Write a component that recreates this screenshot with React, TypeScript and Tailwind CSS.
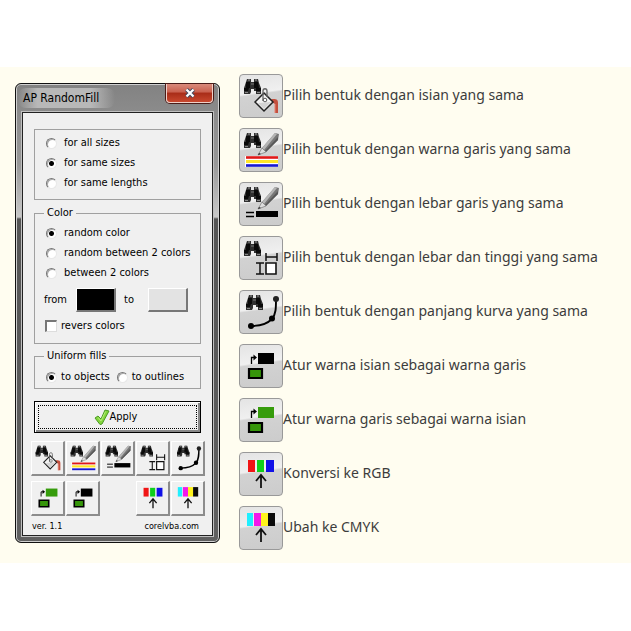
import type { ReactNode } from "react";

type IconName =
  | "fill"
  | "outlineColor"
  | "outlineWidth"
  | "dimensions"
  | "curve"
  | "fillToOutline"
  | "outlineToFill"
  | "rgb"
  | "cmyk";

function Binoculars() {
  return (
    <g>
      <path d="M8 5h4v3h3V5h4l1 4 2 5v6h-5v-3h-2v-2h-3v3l-1 2H5v-6l2-6z" fill="#303030" />
      <path d="M7 8h4v6H7zM15 8h4l1 6h-5zM5 14h5l-1 3H5zM17 14h5v3h-5z" fill="#0a0a0a" />
      <path d="M9 5h2v2H9zM16 5h2v2h-2z" fill="#666" />
      <path d="M12 9h3v2h-3z" fill="#555" />
      <path d="M6 18h3v1H6zM18 18h3v1h-3z" fill="#888" />
    </g>
  );
}

function Pencil() {
  return (
    <g>
      <path d="M36 5l4 1-1 6-12 12-4-4z" fill="#777" />
      <path d="M36 5l2 1-13 16-2-2z" fill="#b5b5b5" />
      <path d="M39 9v3L27 24l-1-1z" fill="#585858" />
      <path d="M23 20l4 4-8 3z" fill="#ddd" stroke="#777" strokeWidth=".7" />
      <path d="M20 25l2 1-3 1z" fill="#222" />
    </g>
  );
}

function UpArrow() {
  return <path d="M22 36V23M17 29l5-6 5 6" fill="none" stroke="#111" strokeWidth="1.8" />;
}

function TurnArrow() {
  return (
    <g>
      <path d="M12.5 20v-6.500H16" fill="none" stroke="#000" strokeWidth="1.300" />
      <path d="M14.500 10.500l3.500 3-3.500 3z" fill="#000" />
    </g>
  );
}

const drawings: Record<IconName, ReactNode> = {
  fill: (
    <>
      <Binoculars />
      <path d="M33 25c4 0 6 0 6 4v10h-3V30l-5-3z" fill="#c4503e" />
      <path d="M36 30v9" stroke="#e58474" strokeWidth="1" />
      <path d="M16 28l9-9 9 9-9 9z" fill="#f3f3f3" stroke="#222" strokeWidth="1.500" />
      <path d="M19 29l6 6 7-7z" fill="#d4d4d4" />
      <path d="M24 27V17c0-3 4-3 4 0v6" fill="none" stroke="#666" strokeWidth="1.300" />
      <circle cx="26" cy="26" r="1.800" fill="#fff" stroke="#333" strokeWidth=".8" />
    </>
  ),
  outlineColor: (
    <>
      <Binoculars />
      <Pencil />
      <path d="M6 28h33v11H6z" fill="#fff" />
      <path d="M7 29.500h32" stroke="#e01818" strokeWidth="2.600" />
      <path d="M7 33.500h32" stroke="#ffe528" strokeWidth="3" />
      <path d="M7 37.500h32" stroke="#1717d4" strokeWidth="2.600" />
    </>
  ),
  outlineWidth: (
    <>
      <Binoculars />
      <Pencil />
      <path d="M7 30.500h8M7 34.500h8" stroke="#000" strokeWidth="1.300" />
      <path d="M17 29h22v6H17z" fill="#000" />
    </>
  ),
  dimensions: (
    <>
      <Binoculars />
      <path d="M27 27h10v11H27z" fill="#fff" stroke="#111" strokeWidth="1.600" />
      <path d="M17 27h8M17 38h8M21 27v11M27 17v8M38 17v8M27 21h11" fill="none" stroke="#111" strokeWidth="1.500" />
    </>
  ),
  curve: (
    <>
      <g transform="translate(2 0)">
        <Binoculars />
      </g>
      <path d="M37 9c0 9 0 15-4 20-5 5-12 7-21 7" fill="none" stroke="#000" strokeWidth="1.900" />
      <circle cx="37" cy="9" r="3" fill="#222" />
      <circle cx="33" cy="28.500" r="3" />
      <circle cx="12" cy="36" r="3" />
    </>
  ),
  fillToOutline: (
    <>
      <TurnArrow />
      <path d="M19 9h16v11H19z" fill="#000" />
      <path d="M10 25h13v9H10z" fill="#36960a" stroke="#000" strokeWidth="2.200" />
    </>
  ),
  outlineToFill: (
    <>
      <TurnArrow />
      <path d="M19 9h16v11H19z" fill="#369c0c" />
      <path d="M10 25h13v9H10z" fill="#36960a" stroke="#000" strokeWidth="2.200" />
    </>
  ),
  rgb: (
    <>
      <path d="M9 8h7v12H9z" fill="#f01414" />
      <path d="M18 8h7v12h-7z" fill="#10cf1b" />
      <path d="M27 8h8v12h-8z" fill="#1010e8" />
      <UpArrow />
    </>
  ),
  cmyk: (
    <>
      <path d="M8 7h6v13H8z" fill="#20efff" />
      <path d="M15 7h7v13h-7z" fill="#f218ea" />
      <path d="M22 7h7v13h-7z" fill="#fff31d" />
      <path d="M29 7h7v13h-7z" fill="#0b0b0b" />
      <UpArrow />
    </>
  ),
};

function Icon({ name, className }: { name: IconName; className: string }) {
  return (
    <svg viewBox="0 0 44 44" aria-hidden="true" className={className}>
      {drawings[name]}
    </svg>
  );
}

const features: { icon: IconName; text: string }[] = [
  { icon: "fill", text: "Pilih bentuk dengan isian yang sama" },
  { icon: "outlineColor", text: "Pilih bentuk dengan warna garis yang sama" },
  { icon: "outlineWidth", text: "Pilih bentuk dengan lebar garis yang sama" },
  { icon: "dimensions", text: "Pilih bentuk dengan lebar dan tinggi yang sama" },
  { icon: "curve", text: "Pilih bentuk dengan panjang kurva yang sama" },
  { icon: "fillToOutline", text: "Atur warna isian sebagai warna garis" },
  { icon: "outlineToFill", text: "Atur warna garis sebagai warna isian" },
  { icon: "rgb", text: "Konversi ke RGB" },
  { icon: "cmyk", text: "Ubah ke CMYK" },
];

function Radio({ group, label, checked, gap = "gap-[7px]" }: { group: string; label: string; checked?: boolean; gap?: string }) {
  return (
    <label className={`flex h-5 items-center whitespace-nowrap ${gap}`}>
      <input
        type="radio"
        name={group}
        defaultChecked={checked}
        className="size-[11px] shrink-0 appearance-none rounded-full border border-t-[#777] border-r-[#e8e8e8] border-b-[#e8e8e8] border-l-[#777] bg-white shadow-[inset_1px_1px_0_#aaa] checked:bg-[radial-gradient(circle,#000_2px,#fff_3px)]"
      />
      {label}
    </label>
  );
}

function Group({ legend, className, children }: { legend?: string; className: string; children: ReactNode }) {
  return (
    <fieldset className={`border border-[#a0a0a0] pl-[11px] ${className}`}>
      {legend && <legend className="-ml-[2px] px-[3px]">{legend}</legend>}
      {children}
    </fieldset>
  );
}

function ToolButton({ icon, label }: { icon: IconName; label: string }) {
  return (
    <button
      type="button"
      aria-label={label}
      className="h-[35px] w-[34px] border-t border-r-2 border-b-2 border-l border-t-white border-r-[#8c8c8c] border-b-[#8c8c8c] border-l-white bg-[#f0f0f0]"
    >
      <Icon name={icon} className="size-8" />
    </button>
  );
}

function Dialog() {
  return (
    <section className="mt-4 mb-5 w-[205px] shrink-0 self-start rounded-[6px] border border-[#111] bg-[linear-gradient(180deg,#828282_0,#8c8c8c_30px,#989898_80px,#c8c8c8_133px,#555_135px,#606060_100%)] px-[6px] pb-[6px] font-['DejaVu_Sans_Condensed','Liberation_Sans',sans-serif] text-[11px] leading-[14px] text-black shadow-[inset_0_0_0_1px_#d0d0d0]">
      <header className="flex h-7 items-start justify-between">
        <h1 className="mt-1 -ml-1 rounded-lg bg-[linear-gradient(90deg,transparent,#b8b8b8_20%,#b8b8b8_75%,transparent)] py-[3px] pr-4 pl-[5px] text-[12px]">AP RandomFill</h1>
        <button
          type="button"
          aria-label="Close"
          className="flex h-[19px] w-[47px] items-center justify-center rounded-b-[4px] border border-t-0 border-[#f0d0c8] bg-[linear-gradient(180deg,#d98b7c_0,#c9604e_45%,#a82c18_50%,#c8482e_100%)] shadow-[0_0_0_1px_#4a1c18]"
        >
          <svg viewBox="0 0 12 10" className="h-[10px] w-3" aria-hidden="true">
            <path d="M2.500 1.500l7 7M9.500 1.500l-7 7" stroke="#444b60" strokeWidth="4" />
            <path d="M2.500 1.500l7 7M9.500 1.500l-7 7" stroke="#fff" strokeWidth="2.200" />
          </svg>
        </button>
      </header>

      <div className="border border-[#222] bg-[#f0f0f0] pt-4 pb-[2px] shadow-[0_0_0_1px_#c0c0c0]">
        <form className="px-[11px]" onSubmit={(e) => e.preventDefault()}>
          <Group className="pt-[3px] pb-[6px]">
            <Radio group="target" label="for all sizes" />
            <Radio group="target" label="for same sizes" checked />
            <Radio group="target" label="for same lengths" />
          </Group>

          <Group legend="Color" className="mt-[6px] pt-[3px] pb-[9px]">
            <Radio group="color" label="random color" checked />
            <Radio group="color" label="random between 2 colors" />
            <Radio group="color" label="between 2 colors" />
            <div className="mt-[5px] -ml-[2px] flex items-center">
              <span id="from" className="w-8">from</span>
              <button type="button" aria-labelledby="from" className="h-6 w-10 border-t border-r-2 border-b-2 border-l border-t-white border-r-[#777] border-b-[#777] border-l-white bg-black" />
              <span id="to" className="w-8 pl-2">to</span>
              <button type="button" aria-labelledby="to" className="h-6 w-10 border-t border-r-2 border-b-2 border-l border-t-white border-r-[#777] border-b-[#777] border-l-white bg-[#e3e3e3]" />
            </div>
            <label className="mt-[6px] -ml-px flex h-4 items-center gap-1">
              <input
                type="checkbox"
                className="size-3 appearance-none border-t-2 border-r border-b border-l-2 border-t-[#777] border-r-[#ddd] border-b-[#ddd] border-l-[#777] bg-white checked:bg-[#444]"
              />
              revers colors
            </label>
          </Group>

          <Group legend="Uniform fills" className="mt-[5px] pt-1 pb-px">
            <div className="flex gap-[7px]">
              <Radio group="fills" label="to objects" checked gap="gap-1" />
              <Radio group="fills" label="to outlines" gap="gap-1" />
            </div>
          </Group>

          <button
            type="submit"
            className="mt-3 flex h-8 w-full border border-black bg-[#f0f0f0] p-[3px] shadow-[inset_1px_1px_0_#fff,inset_-2px_-2px_0_#888]"
          >
            <span className="flex h-full w-full items-center justify-center border border-dotted border-black pr-1">
              <svg viewBox="0 0 16 16" className="size-4" aria-hidden="true">
                <path d="M1 9l3-2 3 3 4-9 4 1-7 13-2 .500z" fill="#83d63c" stroke="#4b9a25" strokeWidth="1" />
                <path d="M11.500 2.500L7 12 4 8.500" fill="none" stroke="#b6ee7c" strokeWidth="1" />
              </svg>
              Apply
            </span>
          </button>
        </form>

        <div className="mt-2 flex flex-col gap-[5px] pl-2">
          <div className="flex gap-px">
            {features.slice(0, 5).map((f) => (
              <ToolButton key={f.icon} icon={f.icon} label={f.text} />
            ))}
          </div>
          <div className="flex gap-px">
            <ToolButton icon="outlineToFill" label={features[6].text} />
            <ToolButton icon="fillToOutline" label={features[5].text} />
            <div className="w-[34px]" />
            <ToolButton icon="rgb" label={features[7].text} />
            <ToolButton icon="cmyk" label={features[8].text} />
          </div>
        </div>

        <footer className="mt-[3px] flex justify-between pr-[13px] pl-[9px] text-[9px]">
          <span>ver. 1.1</span>
          <span>corelvba.com</span>
        </footer>
      </div>
    </section>
  );
}

export default function App() {
  return (
    <main className="min-h-screen bg-white pt-[67px]">
      <div className="flex gap-[19px] bg-[#fffdf0] pl-[15px]">
        <Dialog />
        <ul className="mt-[7px] flex flex-col gap-[10px] font-['Noto_Sans','Open_Sans',sans-serif] text-[14px] leading-5 text-[#3c3c3c]">
          {features.map((f) => (
            <li key={f.icon} className="flex h-11 items-center">
              <span className="flex size-11 shrink-0 items-center justify-center rounded-[4px] border border-[#999] bg-[linear-gradient(172deg,#e4e4e4_0,#f0f0f0_42%,#d2d2d2_46%,#cccccc_100%)]">
                <Icon name={f.icon} className="size-11 shrink-0" />
              </span>
              <span className="pb-[2px]">{f.text}</span>
            </li>
          ))}
        </ul>
      </div>
    </main>
  );
}
